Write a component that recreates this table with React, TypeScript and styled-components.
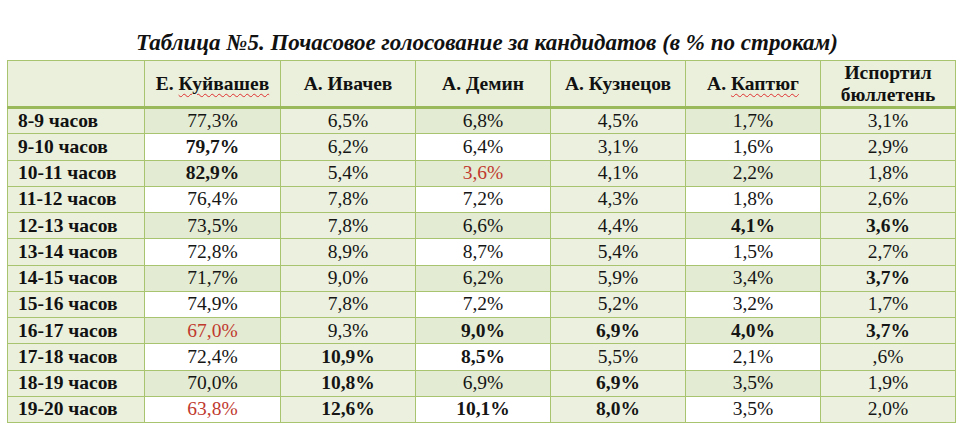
import React from "react";
import styled, { createGlobalStyle } from "styled-components";

const SERIF = `"Liberation Serif", "Times New Roman", "DejaVu Serif", serif`;

const Global = createGlobalStyle`
  html, body { margin: 0; padding: 0; background: #ffffff; }
  body { font-family: ${SERIF}; color: #111; }
  table, th, td { font-family: ${SERIF}; }
`;

const Page = styled.div`
  width: 960px;
  height: 439px;
  padding: 30px 5px 0 7px;
  box-sizing: border-box;
  display: flex;
  flex-direction: column;
  font-family: ${SERIF};
`;

const Title = styled.h1`
  margin: 0 0 4px 0;
  padding-left: 12px;
  font-family: ${SERIF};
  font-size: 23px;
  line-height: 26px;
  font-weight: bold;
  font-style: italic;
  text-align: center;
  color: #111;
`;

const Table = styled.table`
  width: 948px;
  border-collapse: collapse;
  table-layout: fixed;
  border: 1.5px solid #a3c064;
  font-family: ${SERIF};
  font-size: 19.5px;
`;

const HeadCell = styled.th`
  height: 45px;
  padding: 0 4px;
  background: #eaf0dc;
  border: 1.5px solid #a9c46e;
  border-bottom: 3px solid #9ab95a;
  font-family: ${SERIF};
  font-size: 19.5px;
  font-weight: bold;
  text-align: center;
  line-height: 22px;
  vertical-align: middle;
  color: #111;
`;

const Spell = styled.span`
  text-decoration: underline wavy #e03030;
  text-decoration-thickness: 1px;
  text-underline-offset: 3px;
`;

const BodyRow = styled.tr`
  height: 26.25px;
`;

const LabelCell = styled.td`
  padding: 0 0 0 10px;
  background: #eaf0dc;
  border: 1.5px solid #a9c46e;
  font-family: ${SERIF};
  font-size: 19.5px;
  font-weight: bold;
  text-align: left;
  white-space: nowrap;
  line-height: 22px;
  color: #111;
`;

const ValueCell = styled.td<{ $shade: "none" | "light" | "mid"; $bold?: boolean; $red?: boolean }>`
  padding: 0;
  border: 1.5px solid #a9c46e;
  font-family: ${SERIF};
  font-size: 19.5px;
  text-align: center;
  line-height: 22px;
  background: ${(p) => (p.$shade === "mid" ? "#e3ebd2" : p.$shade === "light" ? "#ebf1de" : "#ffffff")};
  font-weight: ${(p) => (p.$bold ? "bold" : "normal")};
  color: ${(p) => (p.$red ? "#c0392e" : "#151515")};
`;

const rows: { label: string; v: string[] }[] = [
  { label: "8-9 часов", v: ["77,3%", "6,5%", "6,8%", "4,5%", "1,7%", "3,1%"] },
  { label: "9-10 часов", v: ["*79,7%", "6,2%", "6,4%", "3,1%", "1,6%", "2,9%"] },
  { label: "10-11 часов", v: ["*82,9%", "5,4%", "!3,6%", "4,1%", "2,2%", "1,8%"] },
  { label: "11-12 часов", v: ["76,4%", "7,8%", "7,2%", "4,3%", "1,8%", "2,6%"] },
  { label: "12-13 часов", v: ["73,5%", "7,8%", "6,6%", "4,4%", "*4,1%", "*3,6%"] },
  { label: "13-14 часов", v: ["72,8%", "8,9%", "8,7%", "5,4%", "1,5%", "2,7%"] },
  { label: "14-15 часов", v: ["71,7%", "9,0%", "6,2%", "5,9%", "3,4%", "*3,7%"] },
  { label: "15-16 часов", v: ["74,9%", "7,8%", "7,2%", "5,2%", "3,2%", "1,7%"] },
  { label: "16-17 часов", v: ["!67,0%", "9,3%", "*9,0%", "*6,9%", "*4,0%", "*3,7%"] },
  { label: "17-18 часов", v: ["72,4%", "*10,9%", "*8,5%", "5,5%", "2,1%", ",6%"] },
  { label: "18-19 часов", v: ["70,0%", "*10,8%", "6,9%", "*6,9%", "3,5%", "1,9%"] },
  { label: "19-20 часов", v: ["!63,8%", "*12,6%", "*10,1%", "*8,0%", "3,5%", "2,0%"] },
];

export default function App() {
  return (
    <>
      <Global />
      <Page>
        <Title>Таблица №5. Почасовое голосование за кандидатов (в % по строкам)</Title>
        <Table>
          <colgroup>
            <col style={{ width: 137 }} />
            <col style={{ width: 136 }} />
            <col style={{ width: 135 }} />
            <col style={{ width: 135 }} />
            <col style={{ width: 135 }} />
            <col style={{ width: 135 }} />
            <col style={{ width: 135 }} />
          </colgroup>
          <thead>
            <tr>
              <HeadCell />
              <HeadCell>
                Е. <Spell>Куйвашев</Spell>
              </HeadCell>
              <HeadCell>А. Ивачев</HeadCell>
              <HeadCell>А. Демин</HeadCell>
              <HeadCell>А. Кузнецов</HeadCell>
              <HeadCell>
                А. <Spell>Каптюг</Spell>
              </HeadCell>
              <HeadCell>
                Испортил
                <br />
                бюллетень
              </HeadCell>
            </tr>
          </thead>
          <tbody>
            {rows.map((r, ri) => (
              <BodyRow key={r.label}>
                <LabelCell>{r.label}</LabelCell>
                {r.v.map((raw, ci) => {
                  const bold = raw.startsWith("*");
                  const red = raw.startsWith("!");
                  const text = bold || red ? raw.slice(1) : raw;
                  const oddRow = ri % 2 === 0;
                  const oddCol = ci % 2 === 0;
                  const shade = oddRow && oddCol ? "mid" : !oddCol || oddRow ? "light" : "none";
                  return (
                    <ValueCell key={ci} $shade={shade} $bold={bold} $red={red}>
                      {text}
                    </ValueCell>
                  );
                })}
              </BodyRow>
            ))}
          </tbody>
        </Table>
      </Page>
    </>
  );
}
